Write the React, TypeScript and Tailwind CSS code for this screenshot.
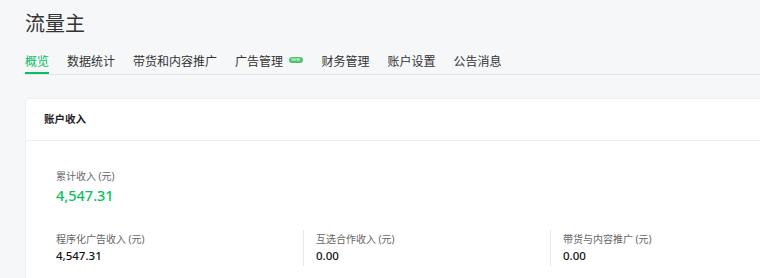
import React from "react";

const tabs = ["概览", "数据统计", "带货和内容推广", "广告管理", "财务管理", "账户设置", "公告消息"];

const font = { fontFamily: '"Noto Sans", "Noto Sans CJK SC", sans-serif' };

export default function App() {
  return (
    <div className="w-[760px] h-[278px] overflow-hidden bg-[#f6f7f9] pl-[25px]" style={font}>
      <div className="pt-[10px] text-[20px] leading-[28px] text-[#333]">流量主</div>
      <div className="mt-[15px] flex gap-[18px] border-b border-[#e3e4e6]">
        {tabs.map((t, i) => (
          <div
            key={t}
            className={
              "flex items-start text-[12px] leading-[18px] pb-[1px] border-b-2 " +
              (i === 0 ? "border-[#07c160] text-[#07c160]" : "border-transparent text-[#333]")
            }
          >
            <span>{t}</span>
            {t === "广告管理" && (
              <span className="ml-[5.5px] mr-[1px] mt-[4px] flex h-[6px] w-[14px] items-center justify-center rounded-full bg-[#4cc26b] text-[4px] leading-none text-white">
                NEW
              </span>
            )}
          </div>
        ))}
      </div>
      <div className="mt-[23px] w-[800px] rounded-[5px] border border-[#eceef1] bg-white">
        <div className="flex h-[42px] items-center border-b border-[#eceef1] pl-[18px] text-[10.5px] font-bold text-[#1f1f1f]">
          账户收入
        </div>
        <div className="pl-[30px] pt-[28px] pb-[20px]">
          <div className="text-[10px] leading-[14px] text-[#666]">累计收入 (元)</div>
          <div className="mt-[2px] text-[14.5px] leading-[20px] font-medium text-[#07c160]">4,547.31</div>
          <div className="mt-[25px] flex">
            <div className="h-[36px] w-[247px] pt-[2px]">
              <div className="text-[10px] leading-[14px] text-[#666]">程序化广告收入 (元)</div>
              <div className="mt-[2px] text-[11.5px] leading-[16px] font-medium text-[#111]">4,547.31</div>
            </div>
            <div className="h-[36px] w-[247px] border-l border-[#e8e9eb] pl-[12px] pt-[2px]">
              <div className="text-[10px] leading-[14px] text-[#666]">互选合作收入 (元)</div>
              <div className="mt-[2px] text-[11.5px] leading-[16px] font-medium text-[#111]">0.00</div>
            </div>
            <div className="h-[36px] w-[247px] border-l border-[#e8e9eb] pl-[12px] pt-[2px]">
              <div className="text-[10px] leading-[14px] text-[#666]">带货与内容推广 (元)</div>
              <div className="mt-[2px] text-[11.5px] leading-[16px] font-medium text-[#111]">0.00</div>
            </div>
          </div>
        </div>
      </div>
    </div>
  );
}
